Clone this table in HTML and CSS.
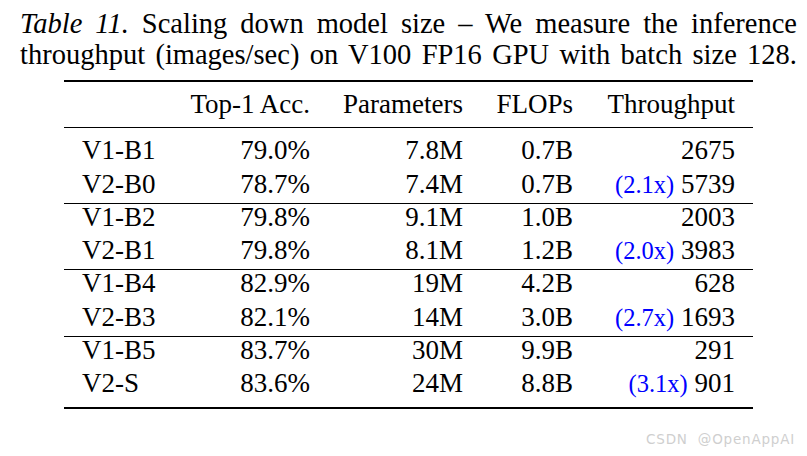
FILE: index.html
```html
<!DOCTYPE html>
<html lang="en">
<head>
<meta charset="utf-8">
<title>Table 11</title>
<link rel="stylesheet" href="styles.css">
</head>
<body>
<div class="page">
  <div class="caption">
    <div class="cap-line"><span class="cap-label">Table 11.</span> Scaling down model size – We measure the inference</div>
    <div class="cap-line">throughput (images/sec) on V100 FP16 GPU with batch size 128.</div>
  </div>
  <div class="table">
    <div class="row head">
      <div class="c1"></div>
      <div class="num">Top-1 Acc.</div>
      <div class="num">Parameters</div>
      <div class="num">FLOPs</div>
      <div class="num">Throughput</div>
    </div>
    <div class="group first">
      <div class="row">
        <div class="c1">V1-B1</div><div class="num">79.0%</div><div class="num">7.8M</div><div class="num">0.7B</div><div class="num">2675</div>
      </div>
      <div class="row">
        <div class="c1">V2-B0</div><div class="num">78.7%</div><div class="num">7.4M</div><div class="num">0.7B</div><div class="num"><span class="speed">(2.1x)</span> 5739</div>
      </div>
    </div>
    <div class="group">
      <div class="row">
        <div class="c1">V1-B2</div><div class="num">79.8%</div><div class="num">9.1M</div><div class="num">1.0B</div><div class="num">2003</div>
      </div>
      <div class="row">
        <div class="c1">V2-B1</div><div class="num">79.8%</div><div class="num">8.1M</div><div class="num">1.2B</div><div class="num"><span class="speed">(2.0x)</span> 3983</div>
      </div>
    </div>
    <div class="group">
      <div class="row">
        <div class="c1">V1-B4</div><div class="num">82.9%</div><div class="num">19M</div><div class="num">4.2B</div><div class="num">628</div>
      </div>
      <div class="row">
        <div class="c1">V2-B3</div><div class="num">82.1%</div><div class="num">14M</div><div class="num">3.0B</div><div class="num"><span class="speed">(2.7x)</span> 1693</div>
      </div>
    </div>
    <div class="group last">
      <div class="row">
        <div class="c1">V1-B5</div><div class="num">83.7%</div><div class="num">30M</div><div class="num">9.9B</div><div class="num">291</div>
      </div>
      <div class="row">
        <div class="c1">V2-S</div><div class="num">83.6%</div><div class="num">24M</div><div class="num">8.8B</div><div class="num"><span class="speed">(3.1x)</span> 901</div>
      </div>
    </div>
  </div>
  <div class="watermark">CSDN @OpenAppAI</div>
</div>
</body>
</html>
```

FILE: styles.css
```css
html, body {
  margin: 0;
  padding: 0;
  background: #ffffff;
}

.page {
  position: relative;
  width: 807px;
  height: 456px;
  overflow: hidden;
  font-family: "Liberation Serif", "Times New Roman", serif;
  color: #000000;
}

.caption {
  padding: 8px 10px 0 20px;
  font-size: 28.5px;
  line-height: 31px;
}

.cap-line {
  text-align: justify;
  text-align-last: justify;
  white-space: nowrap;
}

.cap-label {
  font-style: italic;
}

.table {
  margin: 10px 0 0 64px;
  width: 689px;
  border-top: 2px solid #000;
  border-bottom: 2px solid #000;
  font-size: 27px;
}

.row {
  display: grid;
  grid-template-columns: 89px 139px 153px 110px 162px;
  line-height: 26px;
}

.row.head {
  padding: 8.9px 18px 10.1px;
  border-bottom: 1px solid #000;
}

.group {
  border-top: 1px solid #000;
}

.group .row:first-child {
  padding: 0 18px 3.8px;
}

.group .row:last-child {
  padding: 3.85px 18px 6px;
}

.group.first {
  border-top: none;
  padding-top: 8.9px;
}

.group.last {
  padding-bottom: 4.5px;
}

.c1 {
  text-align: left;
  white-space: nowrap;
}

.num {
  text-align: right;
  white-space: nowrap;
}

.speed {
  color: #0000ff;
  font-size: 24.5px;
  line-height: 0;
}

.watermark {
  position: absolute;
  right: 12px;
  bottom: 9px;
  font-family: "DejaVu Sans", "Liberation Sans", sans-serif;
  font-size: 13.5px;
  letter-spacing: 0.8px;
  word-spacing: 5px;
  color: #cfcfcf;
}
```
